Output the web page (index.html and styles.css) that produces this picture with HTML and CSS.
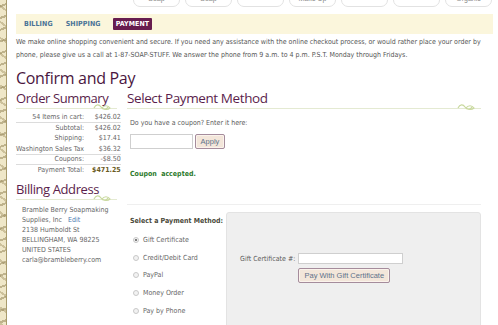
FILE: index.html
```html
<!DOCTYPE html>
<html lang="en">
<head>
    <meta charset="UTF-8">
    <title>Confirm and Pay</title>
    <link rel="stylesheet" href="styles.css">
</head>
<body>
    <div class="frame">
        <div class="strip"></div>
        <div class="page">
            <nav class="cats">
                <span class="cat">Soap</span>
                <span class="cat">Soap</span>
                <span class="cat"></span>
                <span class="cat">Make Up</span>
                <span class="cat"></span>
                <span class="cat"></span>
                <span class="cat">Organic</span>
            </nav>

            <div class="steps">
                <a href="#">BILLING</a>
                <a href="#">SHIPPING</a>
                <a href="#" class="active">PAYMENT</a>
            </div>

            <p class="intro">We make online shopping convenient and secure. If you need any assistance with the online checkout process, or would rather place your order by phone, please give us a call at 1-87-SOAP-STUFF. We answer the phone from 9 a.m. to 4 p.m. P.S.T. Monday through Fridays.</p>

            <h1>Confirm and Pay</h1>

            <div class="cols">
                <aside class="summary">
                    <h2 class="ruled">Order Summary
                        <svg class="leaf" viewBox="0 0 18 8"><path d="M1 5 C3 1 6 1 8 4 C10 7 13 7 15 4 M9 5 C11 2 15 2 17 5 C15 7 11 7 9 5 Z"/></svg>
                    </h2>
                    <table class="totals">
                        <tr class="line"><td>54 Items in cart:</td><td>$426.02</td></tr>
                        <tr><td>Subtotal:</td><td>$426.02</td></tr>
                        <tr><td>Shipping:</td><td>$17.41</td></tr>
                        <tr class="line"><td>Washington Sales Tax</td><td>$36.32</td></tr>
                        <tr class="line"><td>Coupons:</td><td>-$8.50</td></tr>
                        <tr class="total"><td>Payment Total:</td><td>$471.25</td></tr>
                    </table>

                    <h2 class="ruled billing">Billing Address
                        <svg class="leaf" viewBox="0 0 18 8"><path d="M1 5 C3 1 6 1 8 4 C10 7 13 7 15 4 M9 5 C11 2 15 2 17 5 C15 7 11 7 9 5 Z"/></svg>
                    </h2>
                    <div class="address">
                        Bramble Berry Soapmaking<br>
                        Supplies, Inc &nbsp;&nbsp;<a href="#">Edit</a><br>
                        2138 Humboldt St<br>
                        BELLINGHAM, WA 98225<br>
                        UNITED STATES<br>
                        carla@brambleberry.com
                    </div>
                </aside>

                <main class="pay">
                    <h2 class="ruled">Select Payment Method
                        <svg class="leaf" viewBox="0 0 18 8"><path d="M1 5 C3 1 6 1 8 4 C10 7 13 7 15 4 M9 5 C11 2 15 2 17 5 C15 7 11 7 9 5 Z"/></svg>
                    </h2>
                    <p class="coupon-q">Do you have a coupon? Enter it here:</p>
                    <div class="coupon-row">
                        <input type="text" class="field coupon-field">
                        <button class="btn">Apply</button>
                    </div>
                    <p class="ok">Coupon&nbsp; accepted.</p>
                    <div class="divider"></div>

                    <div class="methods">
                        <div class="method-list">
                            <div class="method-title">Select a Payment Method:</div>
                            <label class="opt"><span class="dot checked"></span>Gift Certificate</label>
                            <label class="opt"><span class="dot"></span>Credit/Debit Card</label>
                            <label class="opt"><span class="dot"></span>PayPal</label>
                            <label class="opt"><span class="dot"></span>Money Order</label>
                            <label class="opt"><span class="dot"></span>Pay by Phone</label>
                        </div>
                        <div class="method-box">
                            <div class="gift-row">
                                <span class="gift-label">Gift Certificate #:</span>
                                <div class="gift-fields">
                                    <input type="text" class="field gift-field">
                                    <button class="btn">Pay With Gift Certificate</button>
                                </div>
                            </div>
                        </div>
                    </div>
                </main>
            </div>
        </div>
    </div>
</body>
</html>
```

FILE: styles.css
```css
:root {
    --plum: #5a1e4c;
    --plum-dark: #4a1640;
    --steel: #4a7396;
    --text: #5a5a5a;
    --cream: #fbf6dc;
    --rule: #e4ead2;
    --leaf: #c9d99f;
    --small: "DejaVu Sans Condensed", "DejaVu Sans", sans-serif;
    --head: "Open Sans", "Noto Sans", sans-serif;
}

* {
    margin: 0;
    padding: 0;
    box-sizing: border-box;
}

body {
    background: #ffffff;
    font-family: var(--small);
    font-size: 7px;
    color: var(--text);
    overflow: hidden;
}

.frame {
    display: flex;
    min-height: 325px;
}

/* decorative border on the left */
.strip {
    width: 7px;
    flex-shrink: 0;
    background:
        repeating-linear-gradient(160deg, transparent 0 5px, rgba(150, 135, 90, 0.55) 5px 7px, transparent 7px 11px),
        repeating-linear-gradient(35deg, transparent 0 6px, rgba(170, 155, 110, 0.5) 6px 8px, transparent 8px 13px),
        #efe7c8;
    border-right: 1px solid #a89b6c;
}

.page {
    flex: 1;
    padding: 0 5px 0 9px;
}

/* category pills, cut off at the top */
.cats {
    display: flex;
    gap: 5px;
    height: 7px;
    padding-left: 117px;
    overflow: hidden;
}

.cat {
    width: 47px;
    height: 16px;
    margin-top: -9px;
    border: 1px solid #e2e2e2;
    border-radius: 0 0 7px 7px;
    font-family: "Liberation Sans", sans-serif;
    font-size: 7px;
    color: #8a8a8a;
    text-align: center;
    line-height: 13px;
}

.steps {
    display: flex;
    align-items: center;
    gap: 7px;
    margin-top: 7px;
    height: 20px;
    padding-left: 5px;
    background: var(--cream);
}

.steps a {
    font-size: 7px;
    font-weight: bold;
    color: var(--steel);
    text-decoration: none;
    padding: 2px 3px;
    letter-spacing: 0.1px;
}

.steps a.active {
    background: #671d4f;
    color: #ffffff;
    border-radius: 1px;
    margin-left: 2px;
}

.intro {
    margin-top: 2px;
    line-height: 13px;
    color: #555555;
}

h1 {
    font-family: var(--head);
    font-weight: normal;
    font-size: 16px;
    letter-spacing: -0.3px;
    color: var(--plum-dark);
    line-height: 22px;
    margin-top: 5px;
}

.cols {
    display: flex;
    gap: 10px;
}

h2 {
    font-family: var(--head);
    font-weight: normal;
    font-size: 13.5px;
    letter-spacing: -0.4px;
    color: var(--plum);
    line-height: 18px;
}

.summary h2 {
    font-size: 13px;
}

.ruled {
    position: relative;
    border-bottom: 1px solid var(--rule);
    padding-bottom: 1px;
}

.leaf {
    position: absolute;
    right: 6px;
    bottom: -3px;
    width: 18px;
    height: 8px;
    fill: none;
    stroke: var(--leaf);
    stroke-width: 1.2;
}

.summary {
    width: 101px;
    flex-shrink: 0;
}

.totals {
    width: 100%;
    border-collapse: collapse;
    margin-top: 3px;
}

.totals td {
    height: 10.5px;
    padding: 0;
    text-align: right;
    color: #666666;
    white-space: nowrap;
}

.totals td:first-child {
    padding-right: 8px;
}

.totals tr.line td {
    border-bottom: 1px solid #dcdcdc;
}

.totals tr.total td:last-child {
    font-weight: bold;
    color: #6a5a22;
}

.summary .billing {
    margin-top: 5px;
}

.address {
    padding-left: 6px;
    margin-top: 5px;
    line-height: 10px;
    color: #666666;
}

.address a {
    color: #4a7ab0;
    text-decoration: none;
}

.pay {
    flex: 1;
    padding-right: 12px;
}

.coupon-q {
    margin: 9px 0 0 3px;
    line-height: 10px;
}

.coupon-row {
    display: flex;
    align-items: center;
    gap: 2px;
    margin: 6px 0 0 3px;
}

.field {
    border: 1px solid #cfcfcf;
    background: #ffffff;
}

.coupon-field {
    width: 63px;
    height: 15px;
}

.btn {
    font-family: "Liberation Sans", sans-serif;
    font-size: 7.5px;
    color: #61728a;
    background: #f3e6da;
    border: 1px solid #a58c9c;
    border-radius: 2px;
    box-shadow: inset 0 0 0 1px #fbf3ec;
}

.coupon-row .btn {
    width: 30px;
    height: 15px;
}

.ok {
    margin: 20px 0 0 3px;
    font-weight: bold;
    color: #2b7a2b;
    line-height: 10px;
}

.divider {
    margin-top: 25px;
    border-top: 1px solid #efefef;
}

.methods {
    display: flex;
    margin-top: 7px;
}

.method-list {
    width: 99px;
    flex-shrink: 0;
    padding: 4px 0 0 3px;
}

.method-title {
    font-weight: bold;
    color: #4a4a3a;
    line-height: 10px;
    margin-bottom: 5px;
}

.opt {
    display: flex;
    align-items: center;
    height: 17.8px;
    padding-left: 3px;
    color: #666666;
}

.dot {
    width: 6px;
    height: 6px;
    border-radius: 50%;
    border: 1px solid #c8c8c8;
    background: #f2f2f2;
    margin-right: 4px;
    position: relative;
}

.dot.checked::after {
    content: "";
    position: absolute;
    left: 1px;
    top: 1px;
    width: 2px;
    height: 2px;
    border-radius: 50%;
    background: #555555;
}

.method-box {
    flex: 1;
    height: 120px;
    background: #efefef;
    border: 1px solid #e3e3e3;
    border-radius: 3px;
    padding: 39px 0 0 13px;
}

.gift-row {
    display: flex;
    gap: 3px;
}

.gift-label {
    line-height: 12px;
    margin-top: 1px;
}

.gift-fields {
    display: flex;
    flex-direction: column;
    align-items: flex-start;
    gap: 4px;
}

.gift-field {
    width: 105px;
    height: 11px;
    margin-top: 1px;
}

.gift-fields .btn {
    width: 92px;
    height: 15px;
}
```
